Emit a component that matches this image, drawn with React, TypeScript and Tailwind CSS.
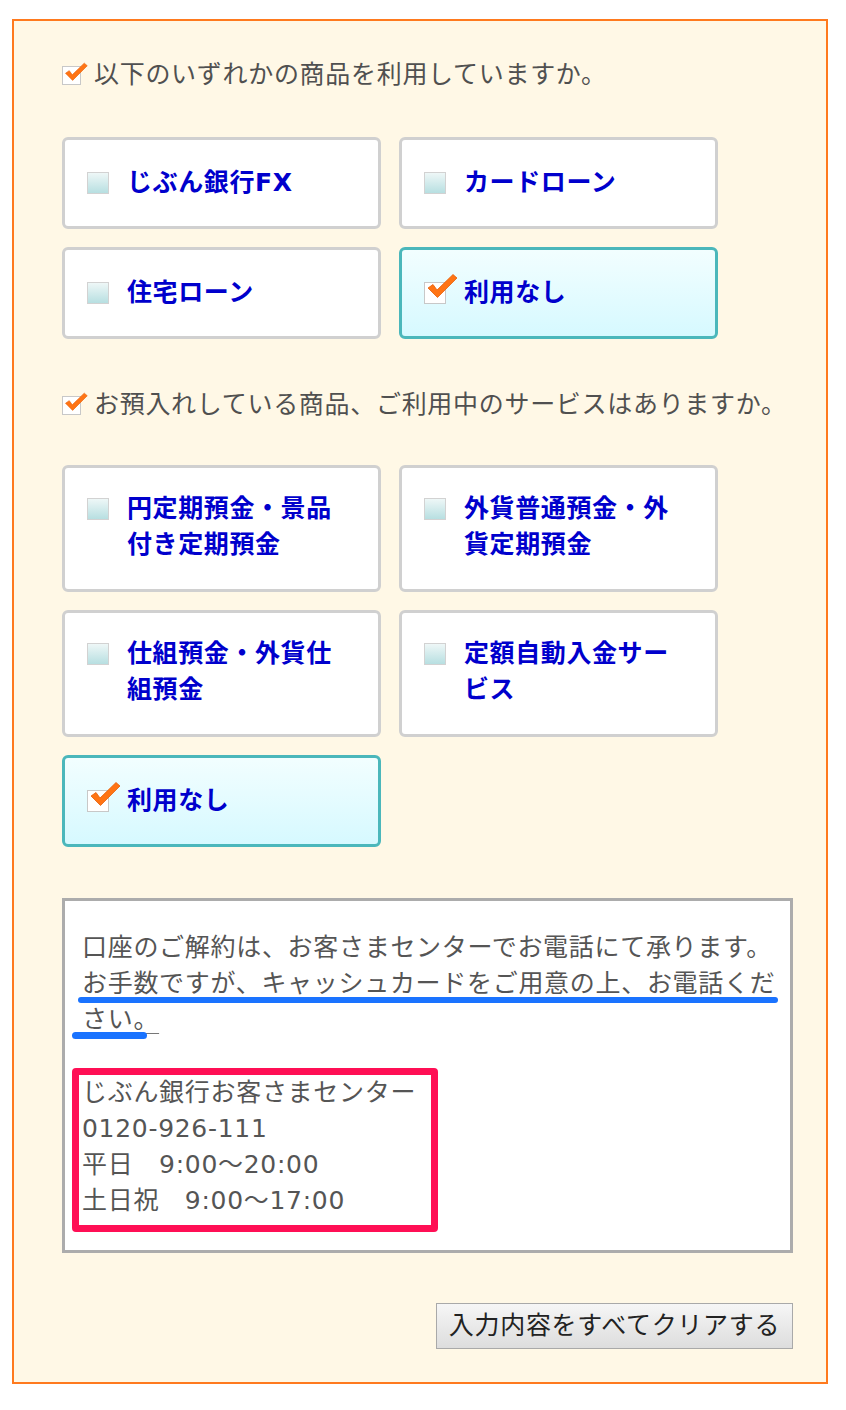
import React from "react";

type Item = { label: string; checked?: boolean; tall?: boolean };

const font = { fontFamily: '"DejaVu Sans", "Noto Sans CJK JP", sans-serif' };

const products: Item[] = [
  { label: "じぶん銀行FX" },
  { label: "カードローン" },
  { label: "住宅ローン" },
  { label: "利用なし", checked: true },
];

const services: Item[] = [
  { label: "円定期預金・景品付き定期預金", tall: true },
  { label: "外貨普通預金・外貨定期預金", tall: true },
  { label: "仕組預金・外貨仕組預金", tall: true },
  { label: "定額自動入金サービス", tall: true },
  { label: "利用なし", checked: true },
];

function Tick({ className }: { className: string }) {
  return (
    <svg viewBox="0 0 32 28" className={className}>
      <path d="M2 15 L7 11.5 L11 17 L27 1.5 L31 5 L11.5 24.5 Z" fill="#ff7414" stroke="#e6600a" strokeWidth="0.8" strokeLinejoin="round" />
    </svg>
  );
}

function CheckBox({ checked, small }: { checked?: boolean; small?: boolean }) {
  const box = small ? "w-[19px] h-[19px]" : "w-[22px] h-[22px]";
  if (checked) {
    return (
      <span className={`relative shrink-0 ${box} bg-white border border-[#c8c8c8]`}>
        <Tick className={small ? "absolute left-[1px] top-[-5px] w-[24px] h-[21px]" : "absolute left-[1px] top-[-10px] w-[32px] h-[28px]"} />
      </span>
    );
  }
  return <span className={`shrink-0 ${box} border border-[#d2d2d2] bg-gradient-to-b from-[#eef7f7] to-[#b7dfe1]`} />;
}

function Card({ item }: { item: Item }) {
  return (
    <div
      className={`flex items-start rounded-[6px] border-[3px] pl-[22px] ${item.tall ? "h-[127px] pt-[23px]" : "h-[92px] pt-[25px]"} ${
        item.checked ? "border-[#4bb7bb] bg-gradient-to-b from-[#f2feff] to-[#d6f9ff]" : "border-[#d0d0d0] bg-white"
      }`}
    >
      <span className="flex h-[36px] items-center">
        <CheckBox checked={item.checked} />
      </span>
      <span className="ml-[18px] w-[214px] text-[25px] font-bold leading-[36px] tracking-[0.6px] text-[#0000cc]">{item.label}</span>
    </div>
  );
}

function Question({ text }: { text: string }) {
  return (
    <div className="flex h-[36px] items-center text-[25px] leading-[36px] tracking-[0.7px] text-[#505050]">
      <CheckBox checked small />
      <span className="ml-[13px]">{text}</span>
    </div>
  );
}

export default function App() {
  return (
    <div className="min-h-[1410px] bg-white pt-[19px] pl-[12px]" style={font}>
      <div className="w-[816px] border-2 border-[#ff7a1e] bg-[#fff8e6] pt-[36px] pl-[48px] pr-[33px] pb-[33px]">
        <Question text="以下のいずれかの商品を利用していますか。" />
        <div className="mt-[44px] grid w-[656px] grid-cols-2 gap-[18px]">
          {products.map((p, i) => (
            <Card key={i} item={p} />
          ))}
        </div>

        <div className="mt-[48px]">
          <Question text="お預入れしている商品、ご利用中のサービスはありますか。" />
        </div>
        <div className="mt-[42px] grid w-[656px] grid-cols-2 gap-x-[18px] gap-y-[18px]">
          {services.map((s, i) => (
            <Card key={i} item={s} />
          ))}
        </div>

        <div className="mt-[51px] border-[3px] border-[#acacac] bg-white pl-[17px] pr-[8px] pt-[29px] pb-[18px] text-[25px] leading-[36px] tracking-[0.7px] text-[#555555]">
          <p className="relative">
            口座のご解約は、お客さまセンターでお電話にて承ります。
            <br />
            <span className="underline decoration-[#777] decoration-1 underline-offset-[5px]">お手数ですが、キャッシュカードをご用意の上、お電話ください。</span>
            <span className="absolute left-[-4px] top-[67px] h-[6px] w-[700px] rounded-full bg-[#1a73ff]" />
            <span className="absolute left-[-10px] top-[102px] h-[7px] w-[75px] rounded-full bg-[#1a73ff]" />
          </p>
          <div className="ml-[-10px] mt-[30px] w-[366px] rounded-[4px] border-[7px] border-[#ff0f55] pl-[3px] pb-[6px]">
            <p>じぶん銀行お客さまセンター</p>
            <p>0120-926-111</p>
            <p>平日　9:00～20:00</p>
            <p>土日祝　9:00～17:00</p>
          </div>
        </div>

        <div className="mt-[50px] flex justify-end">
          <button className="h-[46px] w-[357px] border border-[#a9a9a9] bg-gradient-to-b from-[#f6f6f6] to-[#dddddd] text-[25px] leading-[36px] tracking-[0.7px] text-[#222222]">
            入力内容をすべてクリアする
          </button>
        </div>
      </div>
    </div>
  );
}
